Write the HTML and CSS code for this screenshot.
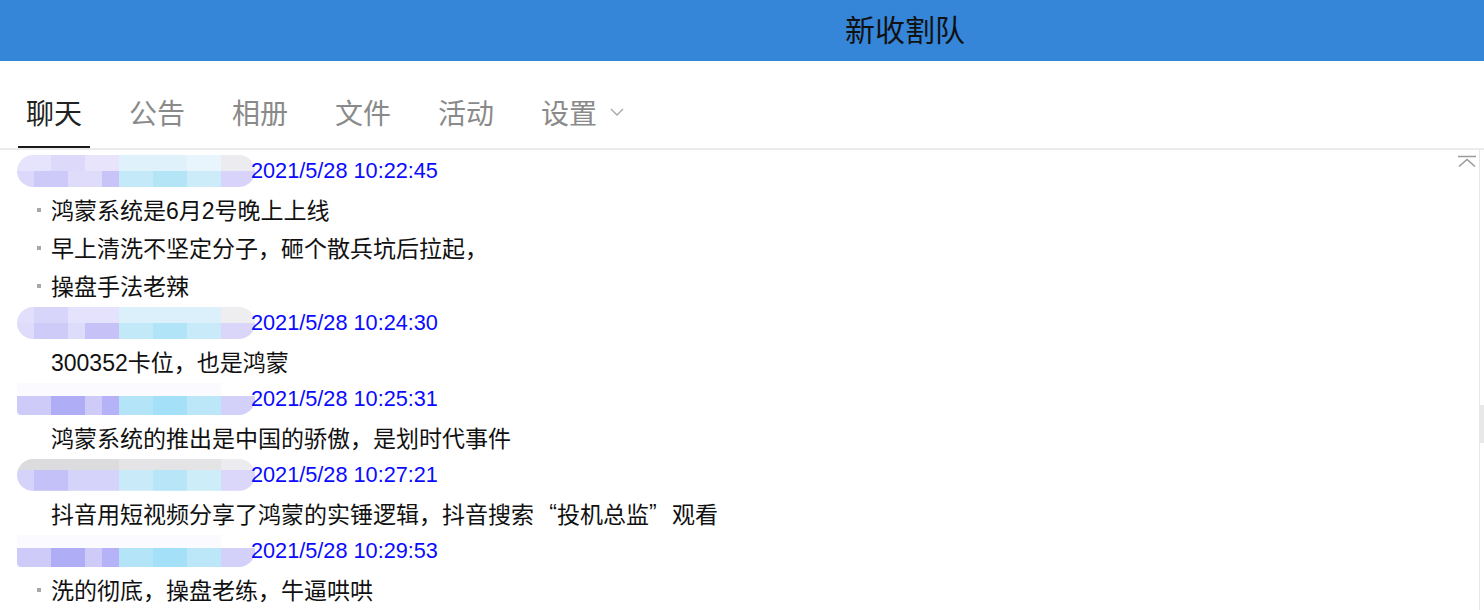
FILE: index.html
```html
<!DOCTYPE html>
<html lang="zh-CN">
<head>
  <meta charset="UTF-8">
  <title>新收割队</title>
  <link rel="stylesheet" href="styles.css">
</head>
<body>
  <header class="topbar">
    <h1 class="titulo">新收割队</h1>
  </header>

  <nav class="tabs">
    <div class="tab active">聊天</div>
    <div class="tab">公告</div>
    <div class="tab">相册</div>
    <div class="tab">文件</div>
    <div class="tab">活动</div>
    <div class="tab">设置
      <svg class="chevron" width="14" height="8" viewBox="0 0 14 8"><path d="M1 1l6 6 6-6" fill="none" stroke="#a8a8a8" stroke-width="1.4"/></svg>
    </div>
  </nav>

  <main class="chat">
    <div class="mensajes">
      <div class="cabecera"><span class="blur"></span><span class="hora">2021/5/28 10:22:45</span></div>
      <div class="msg dot">鸿蒙系统是6月2号晚上上线</div>
      <div class="msg dot">早上清洗不坚定分子，砸个散兵坑后拉起，</div>
      <div class="msg dot">操盘手法老辣</div>

      <div class="cabecera"><span class="blur v2"></span><span class="hora">2021/5/28 10:24:30</span></div>
      <div class="msg">300352卡位，也是鸿蒙</div>

      <div class="cabecera"><span class="blur v3"></span><span class="hora">2021/5/28 10:25:31</span></div>
      <div class="msg">鸿蒙系统的推出是中国的骄傲，是划时代事件</div>

      <div class="cabecera"><span class="blur v4"></span><span class="hora">2021/5/28 10:27:21</span></div>
      <div class="msg">抖音用短视频分享了鸿蒙的实锤逻辑，抖音搜索<span class="comilla izq">“</span>投机总监<span class="comilla der">”</span>观看</div>

      <div class="cabecera"><span class="blur v3"></span><span class="hora">2021/5/28 10:29:53</span></div>
      <div class="msg dot">洗的彻底，操盘老练，牛逼哄哄</div>
    </div>
    <div class="scroll"><div class="thumb"></div></div>

    <button class="arriba" title="回到顶部">
      <svg width="20" height="13" viewBox="0 0 20 13"><path d="M1 1.5h18M2 11.5l8-7 8 7" fill="none" stroke="#9a9a9a" stroke-width="1.6"/></svg>
    </button>
  </main>
</body>
</html>
```

FILE: styles.css
```css
body {
  margin: 0;
  background-color: #ffffff;
  font-family: "Liberation Sans", "Noto Sans CJK SC", sans-serif;
  overflow: hidden;
}

.topbar {
  height: 61px;
  background-color: #3585d8;
  display: flex;
  justify-content: center;
  padding-left: 326px;
}

.titulo {
  margin: 0;
  font-size: 30px;
  font-weight: normal;
  line-height: 56px;
  color: #111111;
  font-family: "Noto Sans CJK SC", sans-serif;
}

.tabs {
  display: flex;
  gap: 31px;
  padding-left: 18px;
  height: 87px;
  border-bottom: 2px solid #ebebeb;
}

.tab {
  display: flex;
  align-items: center;
  height: 40px;
  padding: 31px 8px 14px;
  border-bottom: 2px solid transparent;
  font-size: 28px;
  color: #8a8a8a;
  font-family: "Noto Sans CJK SC", sans-serif;
  cursor: pointer;
}

.tab.active {
  color: #222222;
  border-bottom-color: #1a1a1a;
}

.chevron {
  margin-left: 13px;
}

.chat {
  position: relative;
  display: flex;
  height: 460px;
}

.mensajes {
  flex: 1;
  padding-top: 2px;
  border-right: 1px solid #e6e6e6;
}

.scroll {
  width: 4px;
  position: relative;
}

.thumb {
  margin-top: 255px;
  height: 38px;
  background-color: #e8e8e8;
}

.cabecera {
  display: flex;
  align-items: center;
  height: 38px;
}

.blur {
  display: inline-block;
  width: 238px;
  height: 32px;
  margin-left: 17px;
  margin-right: -4px;
  border-radius: 16px;
  filter: blur(0.6px);
  background:
    linear-gradient(to right, #e6e3fc 0 34px, #dcd9fb 34px 68px, #e7e4fc 68px 102px, #dff1fb 102px 170px, #e9f5fc 170px 204px, #ebebf0 204px) top / 100% 50% no-repeat,
    linear-gradient(to right, #dbd8fb 0 17px, #cdc9f9 17px 51px, #dedbfb 51px 85px, #c8c4f8 85px 102px, #c4e9f8 102px 136px, #b4e5f7 136px 170px, #cdecf9 170px 204px, #d7d3fa 204px) bottom / 100% 50% no-repeat;
}

.blur.v2 {
  background:
    linear-gradient(to right, #e2dffc 0 17px, #d8d5fa 17px 51px, #e4e2fc 51px 102px, #dbf0fb 102px 204px, #eeeef0 204px) top / 100% 50% no-repeat,
    linear-gradient(to right, #dedbfb 0 17px, #cfcbf9 17px 51px, #dedcfb 51px 68px, #c6c2f8 68px 102px, #c2e9f8 102px 136px, #b1e4f7 136px 170px, #c9ebf9 170px 204px, #d9d6fa 204px) bottom / 100% 50% no-repeat;
}

.blur.v3 {
  border-radius: 4px 16px 16px 4px;
  background:
    linear-gradient(to right, #fbfbff 0 204px, #ffffff 204px) top / 100% 40% no-repeat,
    linear-gradient(to right, #cfcbf9 0 34px, #b0adf7 34px 68px, #cfcbf9 68px 85px, #b5b2f7 85px 102px, #b3e4f7 102px 136px, #a4e0f7 136px 170px, #bce7f8 170px 204px, #d3d0fa 204px) bottom / 100% 60% no-repeat;
}

.blur.v4 {
  background:
    linear-gradient(to right, #dcdcde 0 102px, #e4e4e6 102px 204px, #ececf0 204px) top / 100% 35% no-repeat,
    linear-gradient(to right, #d6d3fa 0 17px, #c4c1f8 17px 51px, #d6d3fa 51px 102px, #c9ebf9 102px 136px, #b8e6f8 136px 170px, #cdedf9 170px 204px, #dad7fb 204px) bottom / 100% 65% no-repeat;
}

.hora {
  font-size: 21.7px;
  color: #0a0aff;
  position: relative;
}

.msg {
  display: flex;
  align-items: center;
  height: 38px;
  padding-left: 51px;
  font-size: 23px;
  color: #111111;
}

.msg.dot {
  padding-left: 37px;
}

.msg.dot::before {
  content: "";
  width: 4px;
  height: 4px;
  margin-right: 10px;
  margin-top: 2px;
  background-color: #a8a8a8;
}

.comilla {
  display: inline-block;
  width: 23px;
}

.comilla.izq {
  text-align: right;
}

.comilla.der {
  text-align: left;
}

.arriba {
  position: absolute;
  top: 5px;
  right: 7px;
  padding: 0;
  border: none;
  background: none;
  cursor: pointer;
}
```
